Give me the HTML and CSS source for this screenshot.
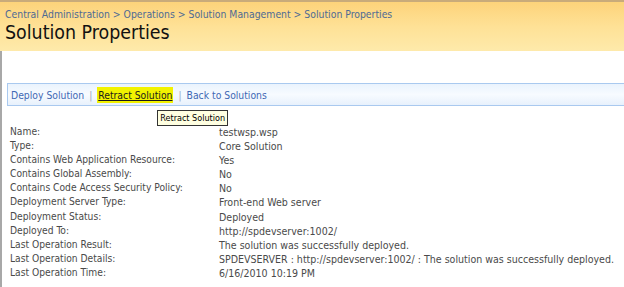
FILE: index.html
```html
<!DOCTYPE html>
<html>
<head>
<meta charset="utf-8">
<link rel="stylesheet" href="styles.css">
</head>
<body>
<div class="header">
  <div class="crumbs">Central Administration &gt; Operations &gt; Solution Management &gt; Solution Properties</div>
  <h1 class="title">Solution Properties</h1>
</div>
<div class="main">
  <div class="toolbar">
    <a class="link">Deploy Solution</a>
    <span class="sep">|</span>
    <span class="hl-wrap"><a class="link active">Retract Solution</a><span class="tooltip">Retract Solution</span></span>
    <span class="sep">|</span>
    <a class="link">Back to Solutions</a>
  </div>
  <div class="props">
    <div class="row"><span class="lbl">Name:</span><span class="val">testwsp.wsp</span></div>
    <div class="row"><span class="lbl">Type:</span><span class="val">Core Solution</span></div>
    <div class="row"><span class="lbl">Contains Web Application Resource:</span><span class="val">Yes</span></div>
    <div class="row"><span class="lbl">Contains Global Assembly:</span><span class="val">No</span></div>
    <div class="row"><span class="lbl">Contains Code Access Security Policy:</span><span class="val">No</span></div>
    <div class="row"><span class="lbl">Deployment Server Type:</span><span class="val">Front-end Web server</span></div>
    <div class="row"><span class="lbl">Deployment Status:</span><span class="val">Deployed</span></div>
    <div class="row"><span class="lbl">Deployed To:</span><span class="val">http://spdevserver:1002/</span></div>
    <div class="row"><span class="lbl">Last Operation Result:</span><span class="val">The solution was successfully deployed.</span></div>
    <div class="row"><span class="lbl">Last Operation Details:</span><span class="val">SPDEVSERVER : http://spdevserver:1002/ : The solution was successfully deployed.</span></div>
    <div class="row"><span class="lbl">Last Operation Time:</span><span class="val">6/16/2010 10:19 PM</span></div>
  </div>
</div>
</body>
</html>
```
FILE: styles.css
```css
html, body {
  margin: 0;
  padding: 0;
  background: #ffffff;
  width: 624px;
  height: 287px;
  overflow: hidden;
  font-family: "DejaVu Sans Condensed", "DejaVu Sans", sans-serif;
}
.header {
  height: 51px;
  border-top: 2px solid #c9ab7a;
  background: linear-gradient(to bottom, #fdd37a 0%, #fee196 50%, #feeaab 100%);
  padding: 6px 0 0 5px;
  box-sizing: border-box;
}
.crumbs {
  font-size: 10.35px;
  color: #4f6a94;
  line-height: 12px;
}
.title {
  margin: 1px 0 0 0;
  font-weight: normal;
  font-size: 19.4px;
  line-height: 23px;
  color: #111111;
}
.main {
  border-left: 2px solid #a8a8a8;
  height: 236px;
  padding-top: 32px;
  box-sizing: border-box;
}
.toolbar {
  margin-left: 5px;
  height: 21px;
  border: 1px solid #a9c9ef;
  border-right: none;
  background: linear-gradient(to bottom, #eaf3fd 0%, #f7fbff 50%, #e8f1fc 100%);
  display: flex;
  align-items: center;
  padding-left: 3px;
  font-size: 10.3px;
}
.link {
  color: #3e68b4;
}
.sep {
  color: #99a8c0;
  margin: 0 5px;
}
.hl-wrap {
  position: relative;
  background: #f2f200;
  padding: 2px 1px;
}
.link.active {
  color: #1a1a1a;
  text-decoration: underline;
}
.tooltip {
  position: absolute;
  left: 60px;
  top: 23px;
  white-space: nowrap;
  background: #ffffe1;
  border: 1px solid #333333;
  color: #000000;
  font-size: 9px;
  line-height: 14px;
  padding: 0 2px;
}
.props {
  margin-top: 19px;
  padding-left: 8px;
  font-size: 10.4px;
  color: #4a4a4a;
}
.row {
  display: flex;
  height: 14.1px;
  line-height: 14px;
  white-space: nowrap;
}
.lbl {
  width: 209px;
  flex: none;
  font-size: 10.2px;
}
.val {
  font-size: 10.55px;
}
```
